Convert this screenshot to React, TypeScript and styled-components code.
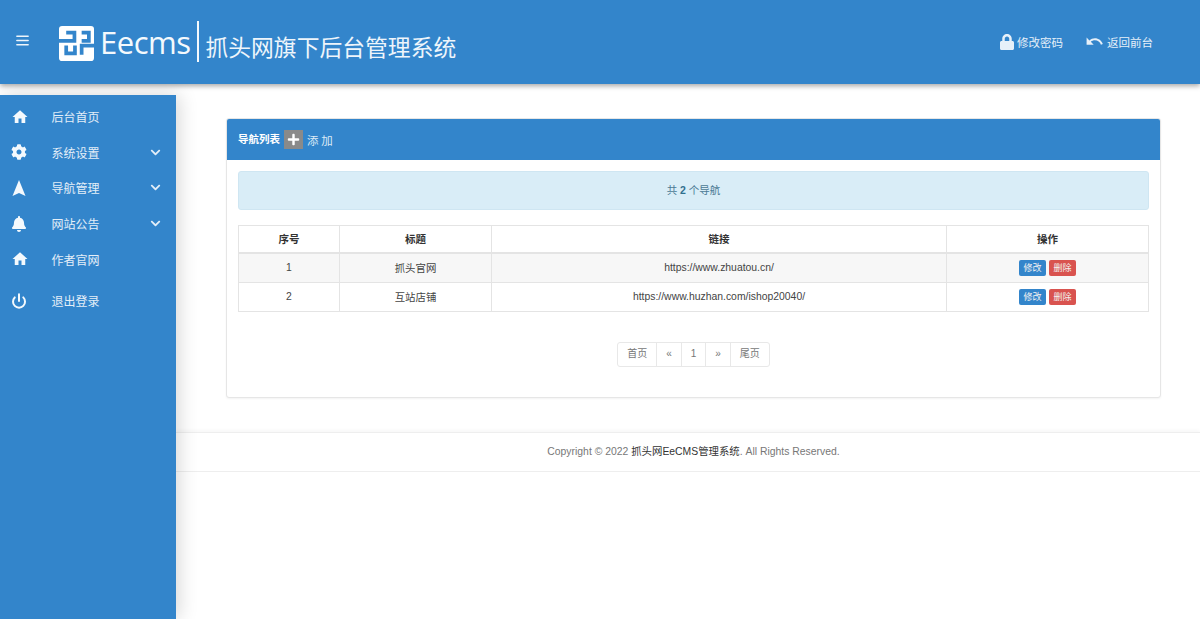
import styled, { createGlobalStyle } from 'styled-components';
import { FaBell, FaChevronDown, FaCog, FaLock, FaPlus } from 'react-icons/fa';
import { MdHome, MdUndo } from 'react-icons/md';
import { LuMenu, LuPower } from 'react-icons/lu';

const BLUE = '#3385cb';
const FONT = '"Liberation Sans", "Noto Sans CJK SC", sans-serif';

const GlobalStyle = createGlobalStyle`
  html, body {
    margin: 0;
    padding: 0;
    background: #fff;
    font-family: ${FONT};
  }
  * {
    box-sizing: border-box;
  }
`;

const navItems = [
  { label: '后台首页', icon: <MdHome size={18} />, arrow: false },
  { label: '系统设置', icon: <FaCog />, arrow: true },
  {
    label: '导航管理',
    icon: (
      <svg viewBox="0 0 16 16" width="16" height="16" fill="currentColor">
        <path d="M8 0 14.5 16 8 13 1.5 16Z" />
      </svg>
    ),
    arrow: true,
  },
  { label: '网站公告', icon: <FaBell />, arrow: true },
  { label: '作者官网', icon: <MdHome size={18} />, arrow: false },
];

const rows = [
  { id: 1, title: '抓头官网', url: 'https://www.zhuatou.cn/' },
  { id: 2, title: '互站店铺', url: 'https://www.huzhan.com/ishop20040/' },
];

const pages = ['首页', '«', '1', '»', '尾页'];

const App = () => {
  return (
    <Page>
      <GlobalStyle />
      <Header>
        <MenuButton>
          <LuMenu />
        </MenuButton>
        <Logo>
          <svg viewBox="0 0 34 34" width="35" height="35">
            <rect width="34" height="34" rx="3" fill="#fff" />
            <path
              d="M7 6.5h8v8H0M7 19v7.5h8.5V19M22 6.5h7v8h-7M22 28V19h12"
              fill="none"
              stroke={BLUE}
              strokeWidth="3.6"
            />
          </svg>
          <LogoText>Eecms</LogoText>
          <LogoDivider />
          <SystemTitle>抓头网旗下后台管理系统</SystemTitle>
        </Logo>
        <HeaderLinks>
          <HeaderLink>
            <FaLock size={16} />
            修改密码
          </HeaderLink>
          <HeaderLink $wide>
            <MdUndo size={19} />
            返回前台
          </HeaderLink>
        </HeaderLinks>
      </Header>
      <Body>
        <Sidebar>
          {navItems.map((item) => (
            <NavItem key={item.label}>
              <NavIcon>{item.icon}</NavIcon>
              <NavLabel>{item.label}</NavLabel>
              {item.arrow && (
                <NavArrow>
                  <FaChevronDown />
                </NavArrow>
              )}
            </NavItem>
          ))}
          <LogoutItem>
            <NavIcon>
              <LuPower strokeWidth={3} />
            </NavIcon>
            <NavLabel>退出登录</NavLabel>
          </LogoutItem>
        </Sidebar>
        <Main>
          <Panel>
            <PanelHeading>
              <PanelTitle>导航列表</PanelTitle>
              <AddIcon>
                <FaPlus />
              </AddIcon>
              <AddLabel>添 加</AddLabel>
            </PanelHeading>
            <PanelBody>
              <Alert>
                共 <strong>2</strong> 个导航
              </Alert>
              <Table>
                <colgroup>
                  <col width="101" />
                  <col width="152" />
                  <col width="455" />
                  <col width="202" />
                </colgroup>
                <thead>
                  <tr>
                    <Th>序号</Th>
                    <Th>标题</Th>
                    <Th>链接</Th>
                    <Th>操作</Th>
                  </tr>
                </thead>
                <tbody>
                  {rows.map((row) => (
                    <Row key={row.id}>
                      <Td>{row.id}</Td>
                      <Td>{row.title}</Td>
                      <Td>{row.url}</Td>
                      <Td>
                        <Actions>
                          <SmallButton $color="#3385cb">修改</SmallButton>
                          <SmallButton $color="#d9534f">删除</SmallButton>
                        </Actions>
                      </Td>
                    </Row>
                  ))}
                </tbody>
              </Table>
              <Pagination>
                {pages.map((page) => (
                  <PageCell key={page} $wide={page.length > 1}>
                    {page}
                  </PageCell>
                ))}
              </Pagination>
            </PanelBody>
          </Panel>
          <Footer>
            Copyright © 2022 <FooterName>抓头网EeCMS管理系统</FooterName>. All Rights Reserved.
          </Footer>
        </Main>
      </Body>
    </Page>
  );
};

const Page = styled.div`
  width: 1200px;
  height: 619px;
  overflow: hidden;
  display: flex;
  flex-direction: column;
`;

const Header = styled.header`
  flex: none;
  height: 84px;
  background: ${BLUE};
  box-shadow: 0 2px 5px rgba(0, 0, 0, 0.35);
  display: flex;
  align-items: center;
  color: #fff;
  position: relative;
  z-index: 2;
`;

const MenuButton = styled.div`
  width: 59px;
  padding-left: 14px;
  display: flex;
  font-size: 17px;
  color: #eef5fb;
  margin-top: -3px;
`;

const Logo = styled.div`
  display: flex;
  align-items: center;
  margin-top: 2px;
`;

const LogoText = styled.span`
  font-family: 'Open Sans', sans-serif;
  font-size: 31px;
  margin: -2px 0 0 6px;
  letter-spacing: -0.5px;
  color: #f4f9fd;
`;

const LogoDivider = styled.span`
  width: 2px;
  height: 41px;
  background: #f4f9fd;
  margin: -4px 0 0 7px;
`;

const SystemTitle = styled.span`
  font-family: 'Noto Sans CJK SC', sans-serif;
  font-size: 22.8px;
  line-height: 30px;
  margin: 8px 0 0 6px;
  color: #eef5fb;
`;

const HeaderLinks = styled.div`
  margin-left: auto;
  margin-right: 47px;
  display: flex;
  align-items: center;
  gap: 22px;
  margin-top: -1px;
`;

const HeaderLink = styled.a<{ $wide?: boolean }>`
  display: flex;
  align-items: center;
  gap: ${({ $wide }) => ($wide ? '3px' : '2px')};
  font-size: 11.5px;
  color: #e6f0f9;
`;

const Body = styled.div`
  flex: 1;
  min-height: 0;
  display: flex;
  padding-top: 11px;
`;

const Sidebar = styled.nav`
  flex: none;
  width: 176px;
  background: ${BLUE};
  box-shadow: 3px 0 18px rgba(0, 0, 0, 0.16);
  padding-top: 4px;
  position: relative;
  z-index: 1;
`;

const NavItem = styled.div`
  height: 35.6px;
  display: flex;
  align-items: center;
  color: #e3eef8;
`;

const LogoutItem = styled(NavItem)`
  margin-top: 6px;
`;

const NavIcon = styled.span`
  width: 51.5px;
  padding-left: 11px;
  display: flex;
  font-size: 16px;
  color: #f4f9fd;
`;

const NavLabel = styled.span`
  font-size: 12px;
`;

const NavArrow = styled.span`
  margin-left: auto;
  margin-right: 15px;
  display: flex;
  font-size: 11px;
`;

const Main = styled.main`
  flex: 1;
  min-width: 0;
  padding-top: 23px;
`;

const Panel = styled.section`
  width: 935px;
  height: 280px;
  margin-left: 50px;
  background: #fff;
  border: 1px solid #e6e6e6;
  border-radius: 3px;
  box-shadow: 0 1px 2px rgba(0, 0, 0, 0.05);
  overflow: hidden;
`;

const PanelHeading = styled.div`
  height: 41px;
  background: ${BLUE};
  display: flex;
  align-items: center;
  padding-left: 11px;
  color: #fff;
`;

const PanelTitle = styled.h3`
  margin: -3px 0 0;
  font-size: 10.5px;
  font-weight: 600;
  font-family: ${FONT};
`;

const AddIcon = styled.span`
  width: 19px;
  height: 19px;
  margin-left: 4px;
  background: #8a8a8a;
  display: flex;
  align-items: center;
  justify-content: center;
  font-size: 13px;
`;

const AddLabel = styled.span`
  margin: 1px 0 0 4px;
  font-size: 11.5px;
  font-family: 'Liberation Serif', 'Noto Sans CJK SC', serif;
  color: #dceaf6;
`;

const PanelBody = styled.div`
  padding: 11px;
`;

const Alert = styled.div`
  height: 39px;
  background: #d9edf7;
  border: 1px solid #cfe6f2;
  border-radius: 3px;
  text-align: center;
  line-height: 37px;
  font-size: 10.5px;
  color: #4b7a94;

  strong {
    color: #31708f;
  }
`;

const Table = styled.table`
  width: 910px;
  margin-top: 15px;
  table-layout: fixed;
  border-collapse: collapse;
  border: 1px solid #e4e4e4;
`;

const Th = styled.th`
  height: 27px;
  border: 1px solid #e4e4e4;
  border-bottom-width: 2px;
  font-size: 10.5px;
  font-weight: 600;
  color: #333;
`;

const Row = styled.tr`
  height: 29.5px;

  &:nth-child(odd) {
    background: #f7f7f7;
  }
`;

const Td = styled.td`
  border: 1px solid #e4e4e4;
  padding: 0;
  text-align: center;
  font-size: 10.4px;
  color: #444;
`;

const Actions = styled.div`
  display: flex;
  justify-content: center;
  gap: 3px;
`;

const SmallButton = styled.a<{ $color: string }>`
  width: 27px;
  height: 16px;
  border-radius: 2px;
  background: ${({ $color }) => $color};
  color: #f2f2f2;
  font-size: 9px;
  line-height: 16px;
  text-align: center;
`;

const Pagination = styled.div`
  display: flex;
  justify-content: center;
  width: 153px;
  margin: 30px auto 0 379px;
  border: 1px solid #e8e8e8;
  border-radius: 3px;
`;

const PageCell = styled.span<{ $wide: boolean }>`
  flex: ${({ $wide }) => ($wide ? '40' : '24.5')};
  height: 23px;
  line-height: 22px;
  text-align: center;
  font-size: 10px;
  color: #777;

  & + & {
    border-left: 1px solid #e8e8e8;
  }
`;

const Footer = styled.footer`
  height: 40px;
  margin-top: 34px;
  background: #fff;
  border-top: 1px solid #eee;
  border-bottom: 1px solid #eee;
  box-shadow: 0 -2px 3px rgba(0, 0, 0, 0.03);
  text-align: center;
  line-height: 38px;
  padding-left: 11px;
  font-size: 10.4px;
  color: #777;
`;

const FooterName = styled.span`
  color: #333;
`;

export default App;
